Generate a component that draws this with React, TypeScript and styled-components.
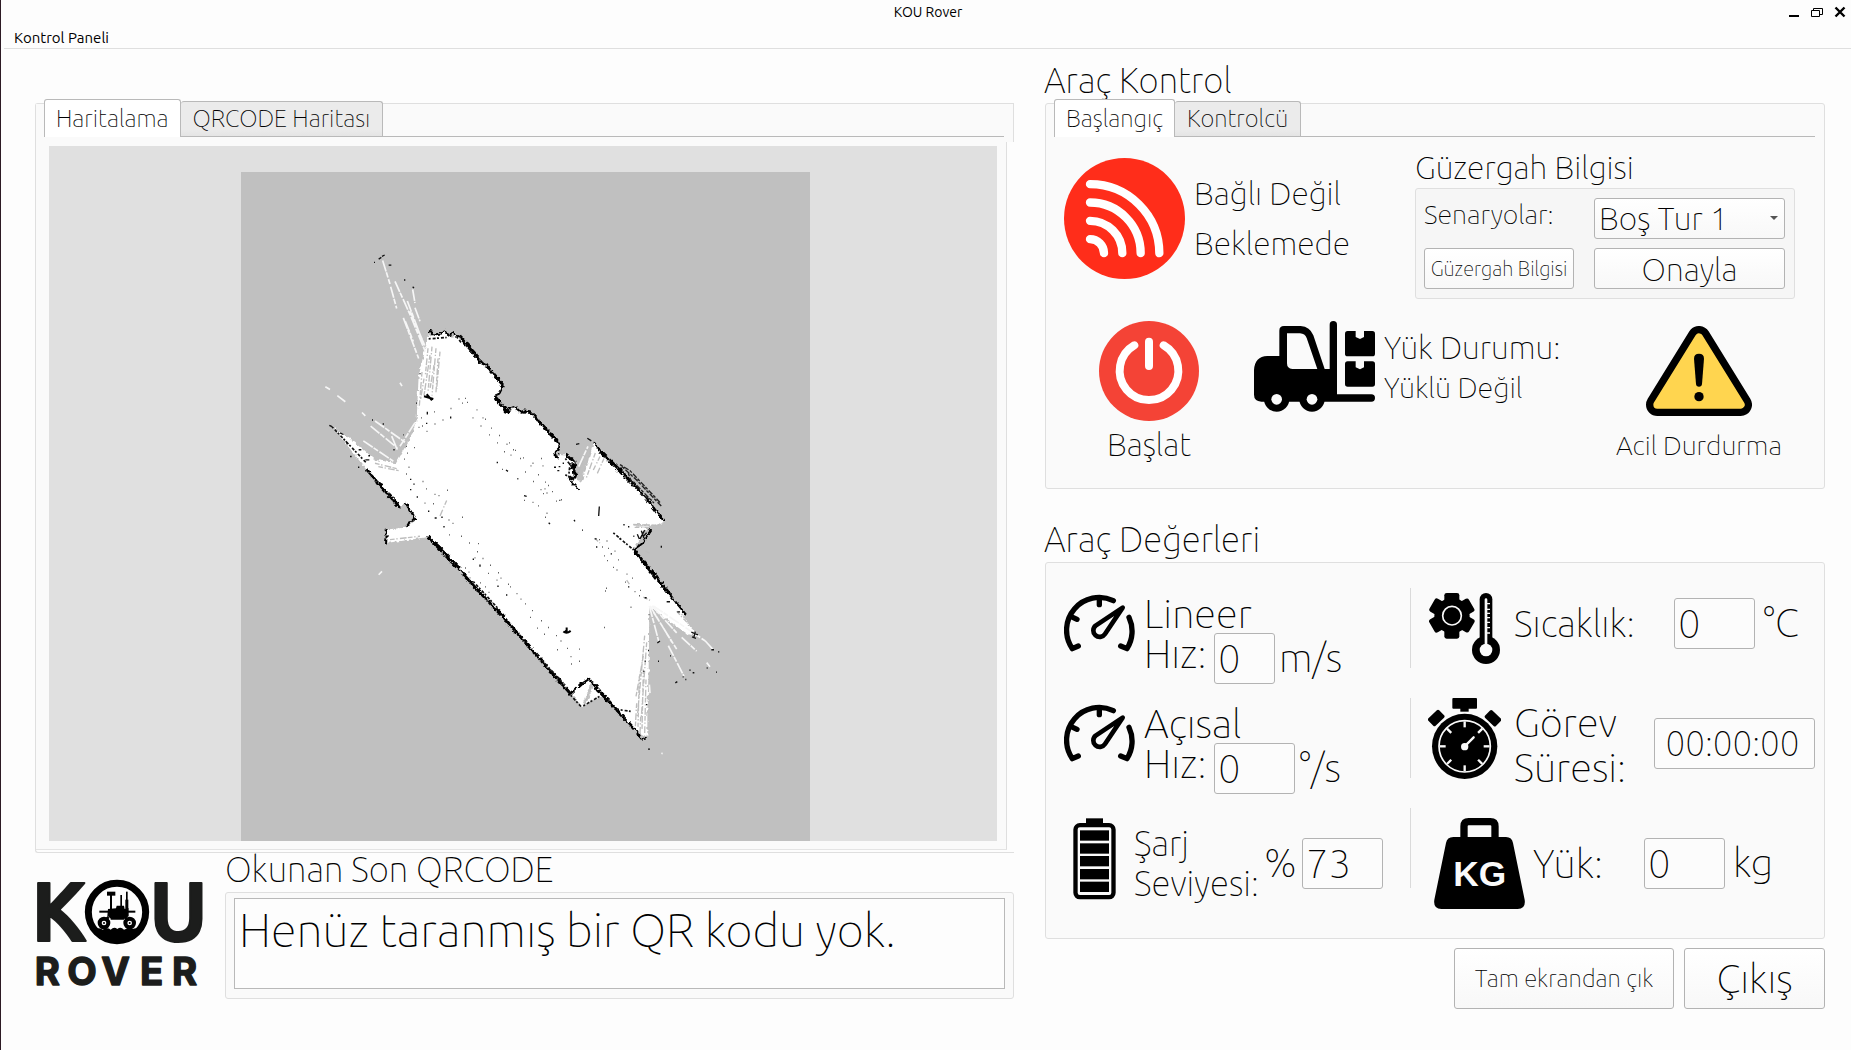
import React, { useState } from 'react';
import styled, { createGlobalStyle } from 'styled-components';

const GlobalStyle = createGlobalStyle`
  *, *::before, *::after { box-sizing: border-box; }
  body {
    margin: 0;
    background: #fdfdfd;
    color: #000;
    font-family: Ubuntu, "Noto Sans", sans-serif;
    font-weight: 100;
  }
  button, input, select, textarea { font: inherit; color: inherit; margin: 0; }
`;

/* ---------- window chrome ---------- */

const Window = styled.div`
  display: flex;
  flex-direction: column;
  min-height: 100vh;
  border-left: 1px solid #2c1a24;
`;

const TitleBar = styled.header`
  display: grid;
  grid-template-columns: 1fr auto 1fr;
  align-items: center;
  height: 24px;
  padding: 0 5px 0 9px;
  font-weight: 400;
`;

const WindowTitle = styled.h1`
  grid-column: 2;
  margin: 0;
  font-size: 14px;
  font-weight: 400;
`;

const WindowButtons = styled.div`
  display: flex;
  justify-content: flex-end;
  gap: 11px;
`;

const WindowButton = styled.button`
  display: flex;
  width: 12px;
  height: 12px;
  padding: 0;
  border: 0;
  background: none;
`;

const MenuBar = styled.nav`
  display: flex;
  align-items: center;
  height: 25px;
  margin-left: 3px;
  padding: 2px 0 0 10px;
  border-bottom: 1px solid #dfdfdf;
`;

const MenuItem = styled.button`
  padding: 0;
  border: 0;
  background: none;
  font-size: 15px;
  font-weight: 400;
`;

/* ---------- page layout ---------- */

const Main = styled.main`
  display: grid;
  grid-template-columns: 979fr 780fr;
  gap: 31px;
  padding: 8px 26px 24px 34px;
`;

const Column = styled.div<{ $top?: number }>`
  display: flex;
  flex-direction: column;
  min-width: 0;
  padding-top: ${p => p.$top ?? 0}px;
`;

const SectionTitle = styled.h2<{ $top?: number }>`
  margin: ${p => p.$top ?? 0}px 0 0 -1px;
  font-size: 35px;
  font-weight: inherit;
  line-height: 46px;
`;

const Frame = styled.section`
  border: 1px solid #dfdfdf;
  border-radius: 3px;
  background: #fafafa;
`;

/* ---------- tabs ---------- */

const TabBar = styled.div`
  display: flex;
  align-items: flex-end;
  height: 33px;
  margin: 0 9px 0 8px;
  border-bottom: 1px solid #b9b9b9;
`;

const Tab = styled.button<{ $active: boolean }>`
  flex: none;
  height: ${p => (p.$active ? 38 : 35)}px;
  margin-bottom: ${p => (p.$active ? -1 : 0)}px;
  padding: 0 ${p => (p.$active ? 11 : 12)}px;
  border: 1px solid #b9b9b9;
  border-bottom: 0;
  border-left-width: ${p => (p.$active ? 1 : 0)}px;
  border-radius: 3px 3px 0 0;
  background: ${p => (p.$active ? '#fff' : 'linear-gradient(#ebebeb 80%, #e4e4e4)')};
  font-size: 24px;
  line-height: 34px;
  white-space: nowrap;
`;

/* ---------- map ---------- */

const MapFrame = styled(Frame)`
  border-right: 0;
  border-radius: 3px 0 0 3px;
  padding-bottom: 2px;
  background: #fdfdfd;
`;

const MapHead = styled.div`
  height: 38px;
  border-right: 1px solid #dfdfdf;
  background: #fafafa;
`;

const MapPane = styled.div`
  margin-right: 7px;
  padding: 4px 9px 8px 13px;
  border-right: 1px solid #dfdfdf;
  border-bottom: 1px solid #e4e4e4;
  background: #fafafa;
`;

const MapView = styled.div`
  display: flex;
  justify-content: center;
  padding-top: 26px;
  padding-left: 4px;
  background: #e0e0e0;
`;

/* ---------- read QR code ---------- */

const Footer = styled.div`
  display: grid;
  grid-template-columns: 190px 1fr;
`;

const Logo = styled.svg`
  margin-top: 25px;
  overflow: visible;
`;

const ReadLabel = styled.label`
  display: block;
  padding-top: 1px;
  margin-bottom: 8px;
  font-size: 35px;
  line-height: 30px;
`;

const ReadFrame = styled(Frame)`
  display: flex;
  padding: 5px 8px 9px;
`;

const ReadText = styled.textarea`
  flex: 1;
  height: 91px;
  padding: 1px 4px;
  border: 1px solid #b9b9b9;
  border-radius: 0;
  outline: 0;
  background: #fdfdfd;
  font-size: 47px;
  line-height: 60px;
  resize: none;
  overflow: hidden;
`;

/* ---------- buttons and fields ---------- */

const PushButton = styled.button<{ $size: number }>`
  padding: 0;
  border: 1px solid #b3b3b3;
  border-radius: 3px;
  background: linear-gradient(#fff, #f8f8f8);
  font-size: ${p => p.$size}px;
  white-space: nowrap;
`;

const Field = styled.input<{ $width: number; $clock?: boolean }>`
  flex: none;
  width: ${p => p.$width}px;
  height: 51px;
  padding: 0 ${p => (p.$clock ? 7 : 3)}px 0 3px;
  border: 1px solid #b3b3b3;
  border-radius: 3px;
  outline: 0;
  background: #fcfcfc;
  font-size: ${p => (p.$clock ? 35 : 40)}px;
  text-align: ${p => (p.$clock ? 'center' : 'left')};
`;

/* ---------- vehicle control ---------- */

const TopRow = styled.div`
  display: flex;
  align-items: flex-start;
  padding: 9px 29px 0 18px;
`;

const LinkIcon = styled.svg`
  flex: none;
  margin-top: 12px;
`;

const Status = styled.div`
  margin: 22px 0 0 9px;
  font-size: 32px;
  line-height: 50px;
`;

const Route = styled.div`
  width: 380px;
  margin-left: auto;
`;

const RouteTitle = styled.h3`
  margin: 0;
  font-size: 32px;
  font-weight: inherit;
  line-height: 42px;
`;

const RouteFrame = styled(Frame)`
  display: grid;
  grid-template-columns: 150px 191px;
  grid-auto-rows: 41px;
  justify-content: space-between;
  row-gap: 9px;
  padding: 9px 9px 9px 8px;
  background: #f6f6f6;
`;

const RouteLabel = styled.label`
  font-size: 27px;
  line-height: 33px;
`;

const SelectWrap = styled.div`
  position: relative;
  display: flex;
`;

const Select = styled.select`
  width: 100%;
  padding: 0 4px 2px;
  border: 1px solid #b3b3b3;
  border-radius: 3px;
  outline: 0;
  background: linear-gradient(#fff, #f8f8f8);
  font-size: 32px;
  appearance: none;
`;

const SelectArrow = styled.svg`
  position: absolute;
  top: 18px;
  right: 7px;
  pointer-events: none;
`;

const BottomRow = styled.div`
  display: flex;
  align-items: flex-start;
  padding: 22px 42px 14px 53px;
`;

const IconButton = styled.button<{ $size: number; $line: number; $top?: number }>`
  display: flex;
  flex-direction: column;
  align-items: center;
  padding: 0;
  margin-top: ${p => p.$top ?? 0}px;
  border: 0;
  background: none;
  font-size: ${p => p.$size}px;
  line-height: ${p => p.$line}px;
`;

const Load = styled.div`
  display: flex;
  flex: 1;
  gap: 9px;
  margin-left: 55px;
`;

const LoadText = styled.div`
  padding-top: 6px;
  font-size: 32px;
  line-height: 40px;
`;

const LoadState = styled.div`
  font-size: 29px;
`;

/* ---------- vehicle values ---------- */

const Values = styled(Frame)`
  display: grid;
  grid-template-columns: 346px 1px 1fr;
  grid-auto-rows: 110px;
  padding: 25px 9px 20px 18px;
`;

const Divider = styled.div`
  height: 80px;
  background: #dadada;
`;

const Metric = styled.div<{ $top?: boolean; $bottom?: number; $indent?: number; $gap?: number }>`
  display: flex;
  align-items: ${p => (p.$top ? 'flex-start' : 'center')};
  gap: ${p => p.$gap ?? 8}px;
  padding-top: ${p => (p.$top ? 5 : 0)}px;
  padding-bottom: ${p => p.$bottom ?? 0}px;
  padding-left: ${p => p.$indent ?? 0}px;
  font-size: 40px;
  line-height: 42px;
`;

const MetricIcon = styled.svg<{ $space?: number }>`
  flex: none;
  margin-right: ${p => p.$space ?? 0}px;
`;

const MetricLabel = styled.label<{ $size?: number; $line?: number; $grow?: boolean; $drop?: number }>`
  flex: ${p => (p.$grow ? 1 : 'none')};
  padding-top: ${p => p.$drop ?? 0}px;
  font-size: ${p => p.$size ?? 40}px;
  line-height: ${p => p.$line ?? 42}px;
`;

const SpeedGrid = styled.div`
  display: grid;
  grid-template-columns: 66px auto auto;
  grid-template-rows: 40px 51px;
  column-gap: 4px;
`;

const SpeedName = styled.div`
  grid-column: 1 / -1;
`;

const Unit = styled.span<{ $width?: number; $line?: number }>`
  width: ${p => (p.$width ? `${p.$width}px` : 'auto')};
  line-height: ${p => p.$line ?? 42}px;
`;

const Actions = styled.div`
  display: grid;
  grid-template-columns: 220px 141px;
  grid-auto-rows: 61px;
  justify-content: end;
  gap: 10px;
  margin-top: 9px;
`;

/* ---------- drawings ---------- */

const walls = [
  'M385 302 L392 298 L400 310 L412 308 L424 306 L433 297 L445 312 L458 304 L470 312 L484 318 L492 330 L504 338 L518 356 L530 368 L540 390 L548 396 L560 396 L572 418 L588 432 L608 458 L606 468 L598 484 L585 490 L586 498 L596 512 L606 520 L614 536 L626 540 L630 528 L640 524 L652 530 L664 540 L672 534 L690 536 L704 550 L720 570 L736 586 L750 605 L766 620 L780 635 L774 652 L764 658 L764 666 L776 674',
  'M798 664 L812 676 L826 684 L828 696 L816 702 L829 720 L822 736 L808 730 L812 742 L838 770',
  'M882 628 L900 652 L930 680 L968 716 L1000 750 L1040 796 L1068 830 L1092 862',
  'M1000 946 L1050 1010 L1100 1068 L1160 1140',
  'M1000 946 L1018 934 L1030 925 L1040 906 L1054 886',
  'M200 710 L240 755 L300 822 M314 806 L330 828 L346 856 L330 862 L320 878',
  'M385 908 L440 960 L520 1050 L610 1146 L700 1248 L812 1372 L846 1342 L868 1328 L882 1346 L900 1370 L950 1420 L1010 1484 L1020 1504 L1040 1506',
  'M256 884 L260 900 L258 930',
];

const thickWalls =
  'M485 322 L540 388 L562 402 L608 458 M586 494 L626 540 M656 538 L690 540 M700 548 L780 634 M762 662 L776 670 M818 690 L826 730 M385 908 L470 998 M490 1020 L600 1136 M606 1140 L700 1248 L812 1372 M1004 950 L1080 1040 L1110 1078 M900 656 L950 704 L1000 756 M878 1340 L960 1430 M215 728 L300 820';

const whiteRays =
  'M248 90 L270 160 M272 168 L290 232 M285 152 L330 250 L376 360 M338 176 L345 216 M322 210 L372 340 M310 260 L356 380 M345 230 L360 270 M330 240 L378 350 M316 270 L340 330 M76 464 L90 472 M112 490 L136 508 M186 540 L196 550 M212 580 L292 645 M225 565 L315 628 M190 624 L280 684 M275 610 L292 650 M300 452 L306 462 M236 1020 L246 1010 M345 570 L300 640 M1048 1112 L1076 1216 M1050 1112 L1116 1220 M1060 1130 L1130 1240 M1056 1112 L1130 1192 M1145 1205 L1190 1246 M1105 1230 L1152 1320 M1060 1112 L1216 1216 M1216 1216 L1238 1240 M1220 1280 L1230 1292 M1048 1345 L1050 1370 M1084 1548 L1088 1549 M836 700 L864 640';

const greyRays =
  'M384 350 L376 430 M390 370 L372 490 M396 345 L384 480 M408 350 L396 490 M414 380 L408 480 M420 360 L410 470 M402 400 L390 470 M366 420 L358 520 M372 440 L362 500 M862 650 L836 716 M872 650 L846 740 M886 660 L858 736 M900 670 L880 710 M912 676 L892 720 M1000 872 L1088 874 M1004 880 L1060 880 M270 916 L360 906 M225 690 L290 706 M235 700 L296 712 M1034 1200 L1012 1440 M1040 1220 L1024 1440 M1030 1260 L1008 1380 M1038 1330 L1034 1490 M1030 1300 L1026 1480 M1018 1320 L1014 1470 M1010 1400 L1006 1470 M1022 1440 L1020 1490 M874 1344 L854 1404 M440 800 L420 846 M980 1036 L990 1050 M1036 950 L1050 956 M300 640 L320 626 M884 912 L900 926 M1030 1086 L1050 1096 M1130 1128 L1160 1160';

const noise =
  'M476 500h2M486 512h2M496 498h2M502 510h2M452 528h2M452 552v6M518 556h2M530 532h2M548 556h2M556 560h2M542 580h2M568 606h2M574 586h2M592 630h2M598 608h2M620 634h2M628 630h2M612 656h2M640 650h2M646 652h2M632 666h2M592 686v4M618 710l6 4M606 708h2M652 736h3M660 676h2M670 674h2M692 698h2M698 690h2M724 676h2M728 698h2M676 716h2M714 724h2M700 744h2M736 746h2M744 756h2M722 768h2M734 766h2M730 780h2M740 778h2M756 774h2M672 786l8 2M672 800h2M698 806h2M714 816h2M768 802h2M778 800h3M784 798h2M740 838h2M736 850h2M746 866l4 4M822 858l3 4M846 888h3M762 702h6M776 700h5M788 690h4M772 712h6M898 818l-2 28M382 538v8M402 538h2M364 556h2M380 570v4M404 574h2M428 562h2M366 580h2M356 584h2M380 596h2M342 644h2M310 606h2M318 640h2M312 678h2M322 660h2M326 702h2M318 722h2M332 736v4M330 768h4M342 750v4M368 744h2M378 766h2M350 790h4M374 808h2M386 830v4M400 810h2M404 782h2M416 786h2M404 852h6M424 850h4M442 770h2M430 878h4M446 858h2M458 868h2M486 850h2M448 902h2M484 906h2M508 926h2M534 928h2M532 952h2M518 974h4M524 970h2M548 972h2M540 990v6M570 992h2M564 1016h2M594 1014h2M590 1036h2M602 1030h2M592 1054h4M624 1048h2M630 1056h2M618 1080h4M650 1076h2M662 1092h2M676 1106h2M696 1126h2M690 1146h2M724 1156h2M712 1178h2M744 1176h2M732 1196h2M768 1200h2M782 1216h2M772 1242h2M802 1238h2M838 1240h2M812 1262h2M838 1276h2M814 1284h2M912 1176h2M992 1116h2M918 1060h2M916 1068h2M496 1000h2M506 1012h2M540 1044h2M556 1056h2M566 1072h2M884 914h6M888 938h4M898 916h2M920 920h2M924 942h2M932 958h4M944 950h2M912 964h2M922 978h2M954 976h2M940 998h2M950 1006h2M906 938h2M958 914h2M980 1018h2M976 1042h2M996 1030h2M984 1056h4M1004 1070h2M1020 1066h2M1018 1082h2M1034 1088h6M1100 1100h10M1132 1130h8M1046 1138h2M970 872h4M984 878h4M1000 906h3M222 96h3M236 86l8 -5M246 78l8 -4M266 104h8M314 146v4M338 168l4 4M360 424v3M348 512h3M88 578l8 4M120 600l10 5M138 624l4 10M150 670h5M174 702h4M250 572v4M216 562h3M280 650h4M1044 1244h3M1034 1276h3M1030 1306h3M1038 1404h4M1044 1536h6M1110 1260h3M1074 1276h3M1072 1222l8 -6M1126 1340l6 -4M1148 1322h3M1156 1330h3M1168 1302h4M1178 1310h5M1220 1296h3M1248 1308h3M1234 1242h8M1254 1248h4M1084 934v6M828 634l10 -2M862 616l12 8M176 650h8M196 680h12M205 668h5M1174 1190l20 8M1176 1204l12 4M1186 1188l-4 16M1012 900l6 14M1024 890l8 22M1034 888l-14 26M1040 896l-10 10';

function ScanMap() {
  return (
    <svg width="569" height="669" viewBox="0 0 569 669" role="img" aria-label="Harita">
      <defs>
        <filter id="rough" x="-5%" y="-5%" width="110%" height="110%">
          <feTurbulence type="fractalNoise" baseFrequency="0.09" numOctaves="2" seed="4" result="grain" />
          <feDisplacementMap in="SourceGraphic" in2="grain" scale="14" xChannelSelector="R" yChannelSelector="G" />
        </filter>
      </defs>
      <rect width="569" height="669" fill="#c0c0c0" />
      <g transform="translate(59 58) scale(.33333 .338)" fill="none" strokeLinejoin="round">
        <g filter="url(#rough)">
          <path
            fill="#fff"
            d="M385 312 L412 310 L433 300 L445 316 L470 314 L512 352 L540 390 L585 434 L608 460 L585 498 L626 542 L640 528 L690 538 L779 636 L764 664 L800 668 L828 690 L820 735 L845 745 L880 632 L968 716 L1092 864 L1040 880 L1000 946 L1160 1144 L1140 1130 L1190 1200 L1168 1196 L1048 1112 L1046 1300 L1042 1420 L1042 1500 L1010 1482 L868 1330 L812 1372 L385 908 L258 926 L256 886 L320 880 L346 856 L314 806 L300 822 L200 710 L140 634 L96 580 L180 640 L225 680 L288 690 L330 620 L350 560 L356 430 L376 350 Z"
          />
          <path fill="#fff" d="M812 1372 L868 1330 L905 1376 L846 1412 Z" />
          <path d="M852 1405 L878 1344" stroke="#c4c4c4" strokeWidth="10" />
          <path d="M1000 871 L1060 874 L1006 876" stroke="#c4c4c4" strokeWidth="4" />
          <g stroke="#000" strokeWidth="6">
            {walls.map(d => (
              <path key={d} d={d} />
            ))}
          </g>
          <path d={thickWalls} stroke="#000" strokeWidth="9" strokeDasharray="22 3 9 2" />
          <path d="M1048 1112 L1168 1194" stroke="#fff" strokeWidth="8" />
        </g>
        <path d={greyRays} stroke="#bdbdbd" strokeWidth="4" strokeDasharray="14 5 4 7 20 4" />
        <path d={whiteRays} stroke="#f6f6f6" strokeWidth="5" strokeDasharray="34 3 16 5" />
        <path
          d="M966 700 L1010 740 L1085 818 M985 720 L1000 760 M1000 745 L1062 808 M1020 780 L1056 800 M960 694 L990 712 L1080 806"
          stroke="#222"
          strokeWidth="4"
          strokeDasharray="9 5 16 4"
        />
        <path
          d="M386 322 L440 318 M470 316 L486 336 M796 676 L824 712 M796 724 L822 740 M810 690 L806 730 M962 1420 L992 1424 M520 1040 L600 1126 M940 896 L1000 946 M96 582 L200 690 M728 1276 L790 1340 M812 1376 L845 1412 M850 1408 L905 1376"
          stroke="#111"
          strokeWidth="5"
          strokeDasharray="6 6 9 4"
        />
        <path d={noise} stroke="#111" strokeWidth="4" />
        <path d="M372 492 L400 500 M380 486 L396 504 M790 1188 Q800 1196 812 1186 M800 1176 V1190 L794 1186" stroke="#000" strokeWidth="6" />
      </g>
    </svg>
  );
}

function RoverLogo() {
  return (
    <Logo width="172" height="112" viewBox="45 55 516 336" role="img" aria-label="KOU Rover" fill="#1c1d1c">
      <g stroke="#1c1d1c" strokeWidth="6" strokeLinejoin="round" fontFamily="Ubuntu, Lato, sans-serif" fontWeight="700">
        <text x="34" y="244" fontSize="250">K</text>
        <text x="388" y="244" fontSize="250">U</text>
        <text x="44 142 244 360 456" y="376" fontSize="115" fontFamily="Inter, sans-serif" strokeWidth="4">
          ROVER
        </text>
      </g>
      <g fill="#000">
        <circle cx="291" cy="157" r="86" fill="#fdfdfd" stroke="#000" strokeWidth="21" />
        <path d="M216 210 Q236 202 248 210 Q262 202 272 210 Q282 200 292 208 Q302 200 312 210 Q324 204 338 208 Q350 202 366 210 A90 90 0 0 1 216 210Z" />
        <rect x="261" y="96" width="25" height="12" />
        <rect x="270" y="106" width="6" height="46" />
        <rect x="301" y="106" width="5" height="44" />
        <rect x="318" y="96" width="5" height="50" />
        <rect x="316" y="120" width="9" height="28" />
        <path d="M264 148 L288 146 L290 138 H312 L314 148 L326 146 V170 L312 178 H274 L262 168Z" />
        <rect x="238" y="153" width="108" height="6" />
        <path d="M266 172 L248 188 M314 172 L332 188 M272 176 H312" stroke="#000" strokeWidth="8" />
        <circle cx="252" cy="190" r="13" fill="#fdfdfd" stroke="#000" strokeWidth="12" />
        <circle cx="329" cy="190" r="13" fill="#fdfdfd" stroke="#000" strokeWidth="12" />
        <circle cx="252" cy="190" r="3" />
        <circle cx="329" cy="190" r="3" />
      </g>
    </Logo>
  );
}

function GaugeIcon() {
  return (
    <MetricIcon width="71" height="71" viewBox="102 252 213 213" fill="none" stroke="#000" strokeWidth="16" strokeLinecap="round" strokeLinejoin="round" aria-hidden="true">
      <path d="M145 411 L127 419 A98 98 0 0 1 250 275" />
      <path d="M272 411 L291 419 A98 98 0 0 0 297 325" />
      <path d="M208 270 V287 M122 322 L141 331" />
      <path d="M278 296 L225 375 A19 19 0 1 1 197 350 Z" strokeWidth="14" />
    </MetricIcon>
  );
}

function BatteryIcon() {
  return (
    <MetricIcon width="65" height="91" viewBox="102 926 195 273" aria-hidden="true">
      <rect x="168" y="927" width="51" height="22" />
      <rect x="136.5" y="947.5" width="114" height="216" rx="13" fill="none" stroke="#000" strokeWidth="13" />
      {[963, 1002, 1040, 1079, 1117].map(y => (
        <rect key={y} x="150" y={y} width="87" height="31" />
      ))}
    </MetricIcon>
  );
}

function TemperatureIcon() {
  return (
    <MetricIcon $space={6} width="71" height="81" viewBox="87 102 213 243" aria-hidden="true">
      <circle cx="156" cy="200" r="53" />
      {[0, 60, 120].map(a => (
        <rect key={a} x="133" y="132" width="45" height="137" rx="7" transform={`rotate(${a} 156 200)`} />
      ))}
      <circle cx="156" cy="200" r="28" fill="none" stroke="#fafafa" strokeWidth="5" />
      <rect x="232" y="124" width="53" height="160" rx="26" fill="#fafafa" />
      <circle cx="258" cy="303" r="48" fill="#fafafa" />
      <rect x="239" y="132" width="38" height="160" rx="19" />
      <circle cx="258" cy="303" r="42" />
      <circle cx="258" cy="303" r="19" fill="#fafafa" />
      <path d="M258 152 V296" stroke="#fafafa" strokeWidth="8" strokeLinecap="round" />
      <path d="M260 164h10M260 181h10M260 193h10M260 206h10M260 220h10M260 236h10M260 252h10" stroke="#fafafa" strokeWidth="4" />
    </MetricIcon>
  );
}

function StopwatchIcon() {
  return (
    <MetricIcon $space={5} width="73" height="91" viewBox="84 447 219 273" aria-hidden="true">
      <rect x="157" y="447" width="74" height="32" rx="3" />
      <rect x="181" y="476" width="25" height="12" />
      <rect x="86" y="492" width="45" height="31" rx="5" transform="rotate(-44 108 507)" />
      <rect x="257" y="492" width="45" height="31" rx="5" transform="rotate(44 279 507)" />
      <circle cx="194" cy="592" r="98" />
      <circle cx="194" cy="592" r="77" fill="none" stroke="#fafafa" strokeWidth="5" />
      {[0, 45, 90, 135, 180, 225, 270, 315].map(a => (
        <path key={a} d="M194 517 V535" stroke="#fafafa" strokeWidth="7" transform={`rotate(${a} 194 592)`} />
      ))}
      <circle cx="194" cy="593" r="11" fill="#fafafa" />
      <path d="M194 592 L221 565" stroke="#fafafa" strokeWidth="7" strokeLinecap="round" />
    </MetricIcon>
  );
}

function WeightIcon() {
  return (
    <MetricIcon width="91" height="91" viewBox="102 807 273 273" aria-hidden="true">
      <path d="M192 870 V832 Q192 818 206 818 H271 Q285 818 285 832 V870" fill="none" stroke="#000" strokeWidth="22" />
      <path d="M160 864 H318 Q336 864 339 882 L374 1052 Q378 1080 353 1080 H124 Q99 1080 103 1052 L138 882 Q141 864 160 864Z" />
      <text x="239" y="1010" textAnchor="middle" fill="#fafafa" fontFamily="Liberation Sans, sans-serif" fontWeight="700" fontSize="106">
        KG
      </text>
    </MetricIcon>
  );
}

function ConnectionIcon() {
  return (
    <LinkIcon width="121" height="121" viewBox="102 323.5 363 363" fill="none" stroke="#fff" strokeWidth="25" strokeLinecap="round" role="img" aria-label="Bağlantı">
      <circle cx="283.5" cy="505" r="181.5" fill="#ff2d1a" stroke="none" />
      <path d="M180 402 A208 208 0 0 1 388 609" />
      <path d="M180 457 A152 152 0 0 1 332 609" />
      <path d="M180 512 A97 97 0 0 1 277 609" />
      <path d="M180 567 A42 42 0 0 1 222 609" />
    </LinkIcon>
  );
}

function PowerIcon() {
  return (
    <svg width="100" height="100" viewBox="207 813 300 300" fill="none" stroke="#fff" strokeWidth="24" strokeLinecap="round" aria-hidden="true">
      <circle cx="357" cy="963" r="150" fill="#f44336" stroke="none" />
      <path d="M313 886 A88 88 0 1 0 401 886 M357 875 V948" />
    </svg>
  );
}

function ForkliftIcon() {
  return (
    <MetricIcon width="121" height="91" viewBox="672 813 363 273" role="img" aria-label="Forklift">
      <path
        fillRule="evenodd"
        d="M712 918 H748 V842 Q748 828 762 828 H812 Q840 830 850 856 L884 957 H899 V824 A11 11 0 0 1 921 824 V1033 H1024 A11 11 0 0 1 1024 1055 H694 Q672 1053 672 1034 V960 Q674 920 712 918Z M771 850 V940 Q771 956 787 957 H862 L830 864 Q825 851 810 850Z"
      />
      <circle cx="740" cy="1047" r="38" />
      <circle cx="846" cy="1047" r="38" />
      <circle cx="740" cy="1048" r="16" fill="#fafafa" />
      <circle cx="846" cy="1048" r="16" fill="#fafafa" />
      {[843, 934].map(y => (
        <g key={y}>
          <rect x="945" y={y} width="90" height="76" rx="8" />
          <path d={`M977 ${y - 1} H1002 V${y + 18} L990 ${y + 24} L977 ${y + 18}Z`} fill="#fafafa" />
        </g>
      ))}
    </MetricIcon>
  );
}

function WarningIcon() {
  return (
    <svg width="106" height="90" viewBox="738 828 318 270" strokeLinejoin="round" aria-hidden="true">
      <path d="M897 862 L1022 1064 H772Z" fill="#000" stroke="#000" strokeWidth="68" />
      <path d="M897 862 L1022 1064 H772Z" fill="#ffd54f" stroke="#ffd54f" strokeWidth="24" />
      <path d="M882 926 Q882 911 897 911 Q912 911 912 926 L906 1002 Q905 1010 897 1010 Q889 1010 888 1002Z" />
      <circle cx="897" cy="1040" r="14" />
    </svg>
  );
}

/* ---------- page ---------- */

function Tabs({ items }: { items: string[] }) {
  const [active, setActive] = useState(0);
  return (
    <TabBar role="tablist">
      {items.map((item, i) => (
        <Tab key={item} type="button" role="tab" aria-selected={i === active} $active={i === active} onClick={() => setActive(i)}>
          {item}
        </Tab>
      ))}
    </TabBar>
  );
}

function SpeedMetric({ id, name, unit, width }: { id: string; name: string; unit: string; width: number }) {
  return (
    <Metric $top $gap={9}>
      <GaugeIcon />
      <SpeedGrid>
        <SpeedName>{name}</SpeedName>
        <MetricLabel htmlFor={id}>Hız:</MetricLabel>
        <Field id={id} $width={width} defaultValue="0" readOnly />
        <Unit $line={50}>{unit}</Unit>
      </SpeedGrid>
    </Metric>
  );
}

export default function App() {
  return (
    <Window>
      <GlobalStyle />
      <TitleBar>
        <WindowTitle>KOU Rover</WindowTitle>
        <WindowButtons>
          <WindowButton type="button" aria-label="Küçült">
            <svg width="12" height="12" viewBox="0 0 12 12"><path d="M1 10h10" stroke="#000" strokeWidth="2" /></svg>
          </WindowButton>
          <WindowButton type="button" aria-label="Geri yükle">
            <svg width="12" height="12" viewBox="0 0 12 12" fill="none" stroke="#000"><path d="M.5 4.5h8v6h-8zM2.500 4V2.500h9v6H9" /></svg>
          </WindowButton>
          <WindowButton type="button" aria-label="Kapat">
            <svg width="12" height="12" viewBox="0 0 12 12"><path d="M1.500 1.500l9 9M10.500 1.500l-9 9" stroke="#000" strokeWidth="2.400" /></svg>
          </WindowButton>
        </WindowButtons>
      </TitleBar>
      <MenuBar>
        <MenuItem type="button">Kontrol Paneli</MenuItem>
      </MenuBar>

      <Main>
        <Column $top={46}>
          <MapFrame>
            <MapHead>
              <Tabs items={['Haritalama', 'QRCODE Haritası']} />
            </MapHead>
            <MapPane>
              <MapView>
                <ScanMap />
              </MapView>
            </MapPane>
          </MapFrame>
          <Footer>
            <RoverLogo />
            <div>
              <ReadLabel htmlFor="qr">Okunan Son QRCODE</ReadLabel>
              <ReadFrame>
                <ReadText id="qr" readOnly defaultValue="Henüz taranmış bir QR kodu yok." />
              </ReadFrame>
            </div>
          </Footer>
        </Column>

        <Column>
          <SectionTitle>Araç Kontrol</SectionTitle>
          <Frame>
            <Tabs items={['Başlangıç', 'Kontrolcü']} />
            <TopRow>
              <ConnectionIcon />
              <Status>
                <div>Bağlı Değil</div>
                <div>Beklemede</div>
              </Status>
              <Route>
                <RouteTitle>Güzergah Bilgisi</RouteTitle>
                <RouteFrame>
                  <RouteLabel htmlFor="scenario">Senaryolar:</RouteLabel>
                  <SelectWrap>
                    <Select id="scenario">
                      <option>Boş Tur 1</option>
                    </Select>
                    <SelectArrow width="8" height="5" viewBox="0 0 8 5"><path d="M0 0h8L4 4z" fill="#555" /></SelectArrow>
                  </SelectWrap>
                  <PushButton type="button" $size={20}>Güzergah Bilgisi</PushButton>
                  <PushButton type="button" $size={32}>Onayla</PushButton>
                </RouteFrame>
              </Route>
            </TopRow>
            <BottomRow>
              <IconButton type="button" $size={32} $line={46}>
                <PowerIcon />
                Başlat
              </IconButton>
              <Load>
                <ForkliftIcon />
                <LoadText>
                  <div>Yük Durumu:</div>
                  <LoadState>Yüklü Değil</LoadState>
                </LoadText>
              </Load>
              <IconButton type="button" $size={27} $line={58} $top={5}>
                <WarningIcon />
                Acil Durdurma
              </IconButton>
            </BottomRow>
          </Frame>

          <SectionTitle $top={27}>Araç Değerleri</SectionTitle>
          <Values>
            <SpeedMetric id="linear" name="Lineer" unit="m/s" width={61} />
            <Divider />
            <Metric $bottom={40} $indent={18}>
              <TemperatureIcon />
              <MetricLabel htmlFor="temp" $size={37} $grow $drop={2}>Sıcaklık:</MetricLabel>
              <Field id="temp" $width={81} defaultValue="0" readOnly />
              <Unit $width={52}>°C</Unit>
            </Metric>

            <SpeedMetric id="angular" name="Açısal" unit="°/s" width={81} />
            <Divider />
            <Metric $bottom={20} $indent={17}>
              <StopwatchIcon />
              <MetricLabel htmlFor="time" $line={45} $grow $drop={4}>Görev<br />Süresi:</MetricLabel>
              <Field id="time" $width={161} $clock defaultValue="00:00:00" readOnly />
            </Metric>

            <Metric $gap={5}>
              <BatteryIcon />
              <MetricLabel htmlFor="charge" $size={35} $line={40}>Şarj<br />Seviyesi:</MetricLabel>
              <Unit>%</Unit>
              <Field id="charge" $width={81} defaultValue="73" readOnly />
            </Metric>
            <Divider />
            <Metric $indent={23}>
              <WeightIcon />
              <MetricLabel htmlFor="weight" $grow $drop={2}>Yük:</MetricLabel>
              <Field id="weight" $width={81} defaultValue="0" readOnly />
              <Unit $width={82}>kg</Unit>
            </Metric>
          </Values>

          <Actions>
            <PushButton type="button" $size={24}>Tam ekrandan çık</PushButton>
            <PushButton type="button" $size={40}>Çıkış</PushButton>
          </Actions>
        </Column>
      </Main>
    </Window>
  );
}
